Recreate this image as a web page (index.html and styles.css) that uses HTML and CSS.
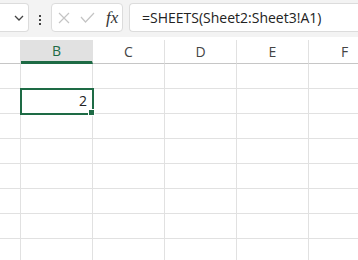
FILE: index.html
```html
<!DOCTYPE html>
<html lang="en">
<head>
    <meta charset="UTF-8">
    <title>SHEETS</title>
    <link rel="stylesheet" href="styles.css">
</head>
<body>
    <div class="toolbar">
        <div class="namebox">
            <svg width="10" height="6" viewBox="0 0 10 6"><path d="M1 1 L5 5 L9 1" fill="none" stroke="#444" stroke-width="1.3"/></svg>
        </div>
        <div class="dots"><span></span><span></span><span></span></div>
        <div class="fxbox">
            <svg width="12" height="12" viewBox="0 0 12 12"><path d="M1 1 L11 11 M11 1 L1 11" stroke="#c4c4c4" stroke-width="1.2"/></svg>
            <svg width="15" height="11" viewBox="0 0 15 11"><path d="M1 5 L5.5 10 L14 1" fill="none" stroke="#c4c4c4" stroke-width="1.2"/></svg>
            <span class="fx">fx</span>
        </div>
        <div class="formula">=SHEETS(Sheet2:Sheet3!A1)</div>
    </div>

    <div class="sheet">
        <div class="hd"></div>
        <div class="hd sel">B</div>
        <div class="hd">C</div>
        <div class="hd">D</div>
        <div class="hd">E</div>
        <div class="hd cut">F</div>

        <div class="cell"></div><div class="cell"></div><div class="cell"></div><div class="cell"></div><div class="cell"></div><div class="cell"></div>
        <div class="cell"></div><div class="cell active">2<span class="handle"></span></div><div class="cell"></div><div class="cell"></div><div class="cell"></div><div class="cell"></div>
        <div class="cell"></div><div class="cell"></div><div class="cell"></div><div class="cell"></div><div class="cell"></div><div class="cell"></div>
        <div class="cell"></div><div class="cell"></div><div class="cell"></div><div class="cell"></div><div class="cell"></div><div class="cell"></div>
        <div class="cell"></div><div class="cell"></div><div class="cell"></div><div class="cell"></div><div class="cell"></div><div class="cell"></div>
        <div class="cell"></div><div class="cell"></div><div class="cell"></div><div class="cell"></div><div class="cell"></div><div class="cell"></div>
        <div class="cell"></div><div class="cell"></div><div class="cell"></div><div class="cell"></div><div class="cell"></div><div class="cell"></div>
        <div class="cell"></div><div class="cell"></div><div class="cell"></div><div class="cell"></div><div class="cell"></div><div class="cell"></div>
    </div>
</body>
</html>
```

FILE: styles.css
```css
body {
    margin: 0;
    width: 358px;
    height: 260px;
    overflow: hidden;
    background: #fff;
    font-family: "Open Sans", "Noto Sans", Arial, sans-serif;
    color: #222;
}
.toolbar {
    display: flex;
    height: 37px;
    padding-top: 3px;
    box-sizing: border-box;
    background: #f3f3f3;
}
.namebox, .fxbox, .formula {
    height: 29px;
    box-sizing: border-box;
    background: #fff;
    border: 1px solid #dcdcdc;
    border-radius: 4px;
}
.namebox {
    width: 29px;
    border-left: none;
    border-radius: 0 4px 4px 0;
    display: flex;
    align-items: center;
    justify-content: flex-end;
    padding-right: 4px;
}
.dots {
    width: 22px;
    display: flex;
    flex-direction: column;
    align-items: center;
    justify-content: center;
    gap: 2px;
}
.dots span {
    width: 2px;
    height: 2px;
    background: #444;
}
.fxbox {
    width: 72px;
    display: flex;
    align-items: center;
    padding-left: 6px;
    gap: 10px;
}
.fx {
    font-family: "Liberation Serif", serif;
    font-style: italic;
    font-size: 17px;
    color: #333;
    margin-left: 1px;
}
.formula {
    flex: 1;
    margin-left: 6px;
    border-right: none;
    border-radius: 4px 0 0 4px;
    padding-left: 12px;
    font-size: 14px;
    line-height: 27px;
    color: #222;
}
.sheet {
    display: grid;
    grid-template-columns: 21px 72px 72px 72px 72px 49px;
    grid-template-rows: 24px;
    grid-auto-rows: 25px;
    margin-top: 3px;
}
.hd {
    border-right: 1px solid #e1e1e1;
    border-bottom: 1px solid #c6c6c6;
    font-size: 14px;
    line-height: 23px;
    text-align: center;
    color: #444;
}
.hd.cut {
    border-right: none;
    text-align: left;
    padding-left: 32px;
}
.hd.sel {
    background: #e1e1e1;
    color: #1e6b45;
    border-bottom: 3px solid #1e6b45;
    line-height: 21px;
}
.cell {
    border-right: 1px solid #e1e1e1;
    border-bottom: 1px solid #e1e1e1;
    font-size: 14px;
    text-align: right;
}
.cell:nth-child(6n) {
    border-right: none;
}
.active {
    position: relative;
    outline: 2px solid #1e6b45;
    outline-offset: -1px;
    line-height: 24px;
    padding-right: 5px;
    z-index: 1;
}
.handle {
    position: absolute;
    right: -3px;
    bottom: -3px;
    width: 5px;
    height: 5px;
    background: #1e6b45;
    border: 1px solid #fff;
}
```
